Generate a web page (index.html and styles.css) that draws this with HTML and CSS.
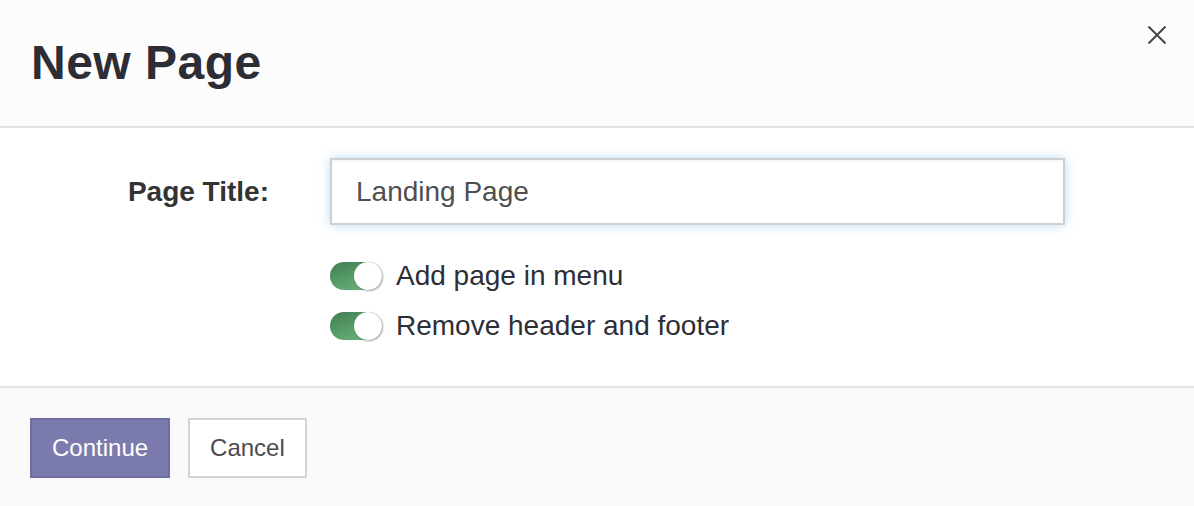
FILE: index.html
```html
<!DOCTYPE html>
<html>
<head>
<meta charset="utf-8">
<link rel="stylesheet" href="styles.css">
</head>
<body>
<div class="dialog">
  <header class="dlg-header">
    <h1 class="dlg-title">New Page</h1>
    <button class="close" aria-label="Close">
      <svg width="20" height="18" viewBox="0 0 20 18"><path d="M1.5 0.5 L18.5 17.5 M18.5 0.5 L1.5 17.5" stroke="#444" stroke-width="2" fill="none"/></svg>
    </button>
  </header>
  <main class="dlg-body">
    <div class="field-row">
      <label class="field-label">Page Title:</label>
      <div class="input">Landing Page</div>
    </div>
    <div class="toggles">
      <div class="toggle-row"><span class="switch"><span class="knob"></span></span><span class="toggle-label">Add page in menu</span></div>
      <div class="toggle-row"><span class="switch"><span class="knob"></span></span><span class="toggle-label">Remove header and footer</span></div>
    </div>
  </main>
  <footer class="dlg-footer">
    <button class="btn btn-primary">Continue</button>
    <button class="btn btn-default">Cancel</button>
  </footer>
</div>
</body>
</html>
```
FILE: styles.css
```css
html, body {
  margin: 0;
  padding: 0;
  background: #ffffff;
}
body {
  font-family: "Liberation Sans", Arial, sans-serif;
  width: 1194px;
  height: 506px;
  overflow: hidden;
}
.dialog {
  display: flex;
  flex-direction: column;
  height: 506px;
}
.dlg-header {
  position: relative;
  height: 126px;
  background: #fcfcfc;
  border-bottom: 2px solid #e3e3e3;
  display: flex;
  align-items: center;
  padding-left: 31px;
  box-sizing: content-box;
}
.dlg-title {
  margin: 0;
  font-size: 48px;
  font-weight: bold;
  color: #2c2d35;
  line-height: 1;
  letter-spacing: 0.5px;
}
.close {
  position: absolute;
  top: 26px;
  right: 27px;
  background: none;
  border: 0;
  padding: 0;
  width: 20px;
  height: 18px;
  display: block;
}
.close svg { display: block; }
.dlg-body {
  background: #ffffff;
  border-bottom: 2px solid #e3e3e3;
  padding-top: 30px;
  box-sizing: border-box;
  height: 260px;
}
.field-row {
  display: flex;
  align-items: center;
  gap: 61px;
}
.field-label {
  width: 269px;
  text-align: right;
  font-size: 28px;
  font-weight: bold;
  color: #333;
}
.input {
  width: 735px;
  height: 67px;
  box-sizing: border-box;
  border: 2px solid #cfcfcf;
  box-shadow: inset 0 2px 2px rgba(0,0,0,0.04), 0 0 10px rgba(102,175,233,0.45);
  padding-left: 24px;
  display: flex;
  align-items: center;
  font-size: 28px;
  color: #4f4f4f;
}
.toggles {
  margin-left: 330px;
  margin-top: 37px;
  display: flex;
  flex-direction: column;
  gap: 22px;
}
.toggle-row {
  display: flex;
  align-items: center;
  gap: 14px;
  height: 28px;
}
.switch {
  position: relative;
  width: 52px;
  height: 28px;
  border-radius: 14px;
  background: linear-gradient(160deg, #3f7d53 0%, #5a9f6b 55%, #6db57d 100%);
  flex: none;
}
.knob {
  position: absolute;
  right: 0;
  top: 0;
  width: 28px;
  height: 28px;
  border-radius: 50%;
  background: #fff;
  box-shadow: 1px 1px 2px rgba(0,0,0,0.35);
}
.toggle-label {
  font-size: 28px;
  color: #2d2e36;
  line-height: 28px;
}
.dlg-footer {
  flex: 1;
  background: #fafafa;
  display: flex;
  align-items: flex-start;
  gap: 18px;
  padding: 30px 0 0 30px;
}
.btn {
  font-family: "Liberation Sans", Arial, sans-serif;
  font-size: 24px;
  height: 60px;
  box-sizing: border-box;
  padding: 0 20px;
  cursor: pointer;
  border-radius: 0;
}
.btn-primary {
  background: #7c7bad;
  border: 2px solid #6f6ea2;
  color: #fff;
}
.btn-default {
  background: #fff;
  border: 2px solid #d4d4d4;
  color: #4c4c4c;
}
```
